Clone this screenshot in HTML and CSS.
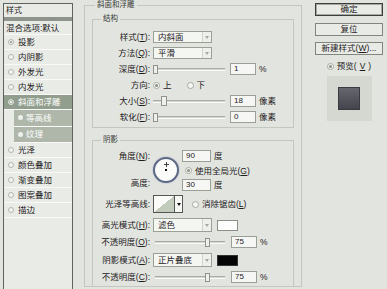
FILE: index.html
```html
<!DOCTYPE html>
<html lang="zh-CN">
<head>
    <meta charset="UTF-8">
    <title>图层样式</title>
    <link rel="stylesheet" href="styles.css">
</head>
<body>
    <div class="dialog">
        <ul class="style-list">
            <li class="list-head">样式</li>
            <li class="blend">混合选项:默认</li>
            <li><span class="check on"></span>投影</li>
            <li><span class="check"></span>内阴影</li>
            <li><span class="check"></span>外发光</li>
            <li><span class="check"></span>内发光</li>
            <li class="active"><span class="check on"></span>斜面和浮雕</li>
            <li class="sub"><span class="bullet"></span>等高线</li>
            <li class="sub"><span class="bullet"></span>纹理</li>
            <li><span class="check"></span>光泽</li>
            <li><span class="check"></span>颜色叠加</li>
            <li><span class="check"></span>渐变叠加</li>
            <li><span class="check"></span>图案叠加</li>
            <li><span class="check"></span>描边</li>
        </ul>

        <fieldset class="group outer">
            <legend>斜面和浮雕</legend>

            <fieldset class="group inner">
                <legend>结构</legend>
                <div class="form">
                    <label>样式(<u>T</u>):</label>
                    <div class="ctrl">
                        <div class="select"><span>内斜面</span><i class="arrow"></i></div>
                    </div>

                    <label>方法(<u>Q</u>):</label>
                    <div class="ctrl">
                        <div class="select"><span>平滑</span><i class="arrow"></i></div>
                    </div>

                    <label>深度(<u>D</u>):</label>
                    <div class="ctrl">
                        <div class="slider"><i class="thumb" style="left: 0%"></i></div>
                        <span class="num">1</span>
                        <span class="unit">%</span>
                    </div>

                    <label>方向:</label>
                    <div class="ctrl">
                        <span class="radio on"></span><span class="opt">上</span>
                        <span class="radio gap"></span><span class="opt">下</span>
                    </div>

                    <label>大小(<u>S</u>):</label>
                    <div class="ctrl">
                        <div class="slider"><i class="thumb tall" style="left: 11%"></i></div>
                        <span class="num">18</span>
                        <span class="unit">像素</span>
                    </div>

                    <label>软化(<u>F</u>):</label>
                    <div class="ctrl">
                        <div class="slider"><i class="thumb" style="left: 0%"></i></div>
                        <span class="num">0</span>
                        <span class="unit">像素</span>
                    </div>
                </div>
            </fieldset>

            <fieldset class="group inner shading">
                <legend>阴影</legend>

                <div class="angle-block">
                    <div class="angle-labels">
                        <label>角度(<u>N</u>):</label>
                        <label>高度:</label>
                    </div>
                    <div class="dial"><i class="cross"></i><i class="center"></i></div>
                    <div class="angle-fields">
                        <div class="ctrl"><span class="num wide">90</span><span class="unit">度</span></div>
                        <div class="ctrl global"><span class="radio on"></span><span class="opt">使用全局光(<u>G</u>)</span></div>
                        <div class="ctrl"><span class="num wide">30</span><span class="unit">度</span></div>
                    </div>
                </div>

                <div class="row contour-row">
                    <label>光泽等高线:</label>
                    <div class="contour"><span class="curve"></span><span class="drop"></span></div>
                    <span class="radio aa"></span><span class="opt">消除锯齿(<u>L</u>)</span>
                </div>

                <div class="row mode-row">
                    <label>高光模式(<u>H</u>):</label>
                    <div class="select mode"><span>滤色</span><i class="arrow"></i></div>
                    <span class="swatch white"></span>
                </div>

                <div class="row">
                    <label>不透明度(<u>O</u>):</label>
                    <div class="slider short"><i class="thumb" style="left: 72%"></i></div>
                    <span class="num op">75</span>
                    <span class="unit">%</span>
                </div>

                <div class="row mode-row">
                    <label>阴影模式(<u>A</u>):</label>
                    <div class="select mode"><span>正片叠底</span><i class="arrow"></i></div>
                    <span class="swatch black"></span>
                </div>

                <div class="row">
                    <label>不透明度(<u>C</u>):</label>
                    <div class="slider short"><i class="thumb" style="left: 72%"></i></div>
                    <span class="num op">75</span>
                    <span class="unit">%</span>
                </div>
            </fieldset>
        </fieldset>

        <div class="actions">
            <button class="btn default">确定</button>
            <button class="btn">复位</button>
            <button class="btn">新建样式(<u>W</u>)...</button>
            <div class="preview-toggle"><span class="radio on"></span>预览(<u>V</u>)</div>
            <div class="preview"><span class="swatch-preview"></span></div>
        </div>
    </div>
</body>
</html>
```

FILE: styles.css
```css
* {
    box-sizing: border-box;
}
body {
    margin: 0;
    width: 387px;
    height: 289px;
    overflow: hidden;
    background-color: #e2e5df;
    font-family: "Liberation Sans", "Noto Sans CJK SC", sans-serif;
    font-size: 8.5px;
    color: #1e201d;
}
u {
    text-decoration: underline;
}
.dialog {
    display: flex;
    align-items: flex-start;
    height: 289px;
    padding-left: 3px;
}

/* left list */
.style-list {
    list-style: none;
    margin: 3px 0 0 0;
    padding: 0;
    width: 70px;
    height: 300px;
    flex: none;
    border: 1px solid #5f635d;
    background-color: #e9ece6;
}
.style-list li {
    height: 15px;
    display: flex;
    align-items: center;
    gap: 4px;
    padding-left: 4px;
    border-bottom: 1px solid #f9faf8;
    line-height: 14px;
    white-space: nowrap;
}
.style-list .list-head {
    height: 17px;
    padding-left: 2px;
    border-bottom: 4px solid #8e938b;
    font-size: 8px;
}
.style-list .blend {
    height: 14px;
    padding-left: 2px;
}
.style-list .active {
    background-color: #929e8d;
    color: #fff;
}
.style-list .sub {
    height: 16.5px;
    margin-left: 10px;
    background-color: #aeb7a9;
    color: #fff;
    gap: 3px;
}
.check {
    width: 6px;
    height: 6px;
    border-radius: 50%;
    border: 1px solid #b0b5ad;
    background-color: #f4f5f2;
    display: flex;
    align-items: center;
    justify-content: center;
}
.check.on::after {
    content: "";
    width: 2px;
    height: 2px;
    border-radius: 50%;
    background-color: #8a9487;
}
.active .check {
    border-color: #dfe4dc;
    background-color: #a9b3a4;
}
.active .check.on::after {
    background-color: #fff;
}
.bullet {
    width: 5px;
    height: 5px;
    border-radius: 50%;
    background-color: #eef0ec;
}

/* group boxes */
.group {
    margin: 0;
    border: 1px solid #c3c7bf;
    min-width: 0;
}
.group legend {
    padding: 0 2px;
    font-size: 7.5px;
    line-height: 10px;
    color: #3a3c39;
}
.outer {
    margin-left: 11px;
    width: 218px;
    height: 287px;
    flex: none;
    padding: 4px 7px 0 7px;
}
.outer > legend {
    margin-left: 3px;
}
.inner {
    padding: 7px 0 4px 0;
}
.inner > legend {
    margin-left: 8px;
}
.shading {
    margin-top: 7px;
    padding-top: 5px;
    padding-bottom: 3px;
}

/* structure form */
.form {
    display: grid;
    grid-template-columns: 57px 1fr;
    grid-auto-rows: 12px;
    column-gap: 3px;
    row-gap: 4px;
}
label {
    text-align: right;
    line-height: 12px;
    white-space: nowrap;
}
.ctrl {
    display: flex;
    align-items: center;
    height: 12px;
}

.select {
    width: 59px;
    height: 12px;
    display: flex;
    border: 1px solid #9ba097;
    background-color: #f4f6f2;
}
.select span {
    flex: 1;
    padding-left: 4px;
    line-height: 10px;
}
.select .arrow {
    width: 9px;
    border-left: 1px solid #cfd3cb;
    background-color: #eef0eb;
    display: flex;
    align-items: center;
    justify-content: center;
}
.select .arrow::after {
    content: "";
    border-left: 2px solid transparent;
    border-right: 2px solid transparent;
    border-top: 3px solid #a3a8a0;
}
.select.mode {
    height: 14px;
}
.select.mode span {
    line-height: 12px;
}

.slider {
    position: relative;
    width: 72px;
    height: 3px;
    border-top: 1px solid #a9ada6;
    border-bottom: 1px solid #fbfcfa;
    background-color: #d3d7cf;
}
.slider.short {
    width: 70px;
    margin-left: 2px;
}
.thumb {
    position: absolute;
    top: -4px;
    width: 5px;
    height: 9px;
    border: 1px solid #8f948c;
    background-color: #eef0ec;
}
.thumb.tall {
    top: -5px;
    width: 6px;
    height: 10px;
}

.num {
    width: 26px;
    height: 12px;
    margin-left: 5px;
    padding-left: 3px;
    border: 1px solid #9ba097;
    background-color: #f6f7f4;
    font-size: 8px;
    line-height: 10px;
}
.num.wide {
    width: 29px;
    margin-left: 0;
}
.num.op {
    margin-left: 6px;
}
.unit {
    margin-left: 3px;
    line-height: 12px;
}

.radio {
    width: 7px;
    height: 7px;
    flex: none;
    border-radius: 50%;
    border: 1px solid #a4a9a1;
    background-color: #f6f7f4;
    display: inline-flex;
    align-items: center;
    justify-content: center;
}
.radio.on::after {
    content: "";
    width: 3px;
    height: 3px;
    border-radius: 50%;
    background-color: #87917f;
}
.radio.gap {
    margin-left: 15px;
}
.opt {
    margin-left: 3px;
    line-height: 12px;
    white-space: nowrap;
}

/* shading */
.angle-block {
    display: flex;
    height: 39px;
}
.angle-labels {
    width: 57px;
    display: flex;
    flex-direction: column;
    justify-content: space-between;
}
.dial {
    position: relative;
    width: 26px;
    height: 26px;
    margin: 7px 0 0 3px;
    border-radius: 50%;
    border: 2px solid #5d6982;
    background-color: #fbfbfa;
    box-shadow: 0 0 0 1px #cfd4dc;
}
.dial .cross {
    position: absolute;
    left: 9px;
    top: 3px;
    width: 5px;
    height: 5px;
    background: linear-gradient(#444, #444) center / 1px 5px no-repeat,
                linear-gradient(#444, #444) center / 5px 1px no-repeat;
}
.dial .center {
    position: absolute;
    left: 10px;
    top: 10px;
    width: 2px;
    height: 2px;
    background-color: #111;
}
.angle-fields {
    margin-left: 3px;
    display: flex;
    flex-direction: column;
    gap: 2.5px;
}
.angle-fields .unit {
    margin-left: 3px;
}
.global {
    padding-left: 3px;
}

.row {
    display: flex;
    align-items: center;
    margin-top: 4px;
    height: 12px;
}
.row label {
    width: 57px;
    margin-right: 3px;
    flex: none;
}
.contour-row {
    height: 18px;
    margin-top: 6px;
}
.contour {
    width: 30px;
    height: 18px;
    display: flex;
    border: 1px solid #545852;
    background-color: #fbfbf9;
}
.contour .curve {
    flex: 1;
    background: linear-gradient(to top left, #c3cbbd 50%, #fbfbf9 50%);
}
.contour .drop {
    width: 8px;
    border-left: 1px solid #545852;
    background-color: #f6f7f4;
    display: flex;
    align-items: center;
    justify-content: center;
}
.contour .drop::after {
    content: "";
    border-left: 2px solid transparent;
    border-right: 2px solid transparent;
    border-top: 3px solid #111;
}
.radio.aa {
    margin-left: 9px;
}
.mode-row {
    height: 14px;
    margin-top: 5px;
}
.mode-row + .row {
    margin-top: 4px;
}
.swatch {
    width: 21px;
    height: 11px;
    margin-left: 5px;
    border: 1px solid #8a8f87;
}
.swatch.white {
    background-color: #fdfdfd;
}
.swatch.black {
    background-color: #050505;
    border-color: #333;
}

/* right column */
.actions {
    margin-left: 13px;
    width: 68px;
    flex: none;
    padding-top: 3px;
    display: flex;
    flex-direction: column;
    align-items: center;
}
.btn {
    width: 68px;
    height: 13px;
    margin: 0 0 6px 0;
    padding: 0;
    border: 1px solid #80857d;
    background-color: #e9ece6;
    font-family: inherit;
    font-size: 8.5px;
    line-height: 11px;
    color: #1e201d;
}
.btn.default {
    margin-bottom: 7px;
    border-color: #3b3e3a;
    box-shadow: inset 0 0 0 1px #a4a9a1;
}
.preview-toggle {
    display: flex;
    align-items: center;
    gap: 3px;
    height: 10px;
    line-height: 10px;
    margin: 0 0 5px 0;
}
.preview {
    width: 45px;
    height: 45px;
    background-color: #d4d8d1;
    display: flex;
    align-items: center;
    justify-content: center;
}
.swatch-preview {
    width: 22px;
    height: 23px;
    border: 1px solid #3a3a40;
    background: linear-gradient(#66666f, #44444c);
}
```
